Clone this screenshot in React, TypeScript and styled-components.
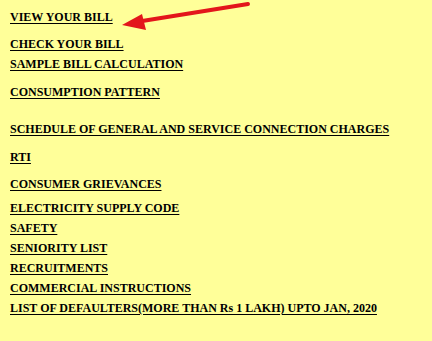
import React from "react";
import styled, { createGlobalStyle } from "styled-components";

const GlobalStyle = createGlobalStyle`
  html, body {
    margin: 0;
    padding: 0;
    background: #ffff99;
  }
`;

const Page = styled.div`
  position: relative;
  width: 432px;
  height: 341px;
  box-sizing: border-box;
  padding: 6px 0 0 10px;
  background: #ffff99;
  font-family: "Liberation Serif", "Times New Roman", serif;
  overflow: hidden;
`;

const LinkList = styled.ul`
  list-style: none;
  margin: 0;
  padding: 0;
  display: flex;
  flex-direction: column;
`;

const Item = styled.li<{ $gap: number }>`
  margin-top: ${p => p.$gap}px;
  line-height: 20px;
  height: 20px;
  white-space: nowrap;
`;

const Link = styled.a`
  color: #000;
  font-size: 12px;
  font-weight: bold;
  text-decoration: underline;
  text-underline-offset: 2px;
  cursor: pointer;
`;

const Arrow = styled.svg`
  position: absolute;
  left: 0;
  top: 0;
  pointer-events: none;
`;

const links: [string, number][] = [
  ["VIEW YOUR BILL", 0],
  ["CHECK YOUR BILL", 7],
  ["SAMPLE BILL CALCULATION", 0],
  ["CONSUMPTION PATTERN", 8],
  ["SCHEDULE OF GENERAL AND SERVICE CONNECTION CHARGES", 17],
  ["RTI", 8],
  ["CONSUMER GRIEVANCES", 7],
  ["ELECTRICITY SUPPLY CODE", 4],
  ["SAFETY", 0],
  ["SENIORITY LIST", 0],
  ["RECRUITMENTS", 0],
  ["COMMERCIAL INSTRUCTIONS", 0],
  ["LIST OF DEFAULTERS(MORE THAN Rs 1 LAKH) UPTO JAN, 2020", 0],
];

export default function App() {
  return (
    <>
      <GlobalStyle />
      <Page>
        <LinkList>
          {links.map(([label, gap]) => (
            <Item key={label} $gap={gap}>
              <Link>{label}</Link>
            </Item>
          ))}
        </LinkList>
        <Arrow width="432" height="341" viewBox="0 0 432 341">
          <line x1="248" y1="4" x2="136" y2="22" stroke="#e3161b" strokeWidth="4" strokeLinecap="round" />
          <polygon points="122,25 142,14 146,30" fill="#e3161b" />
        </Arrow>
      </Page>
    </>
  );
}
